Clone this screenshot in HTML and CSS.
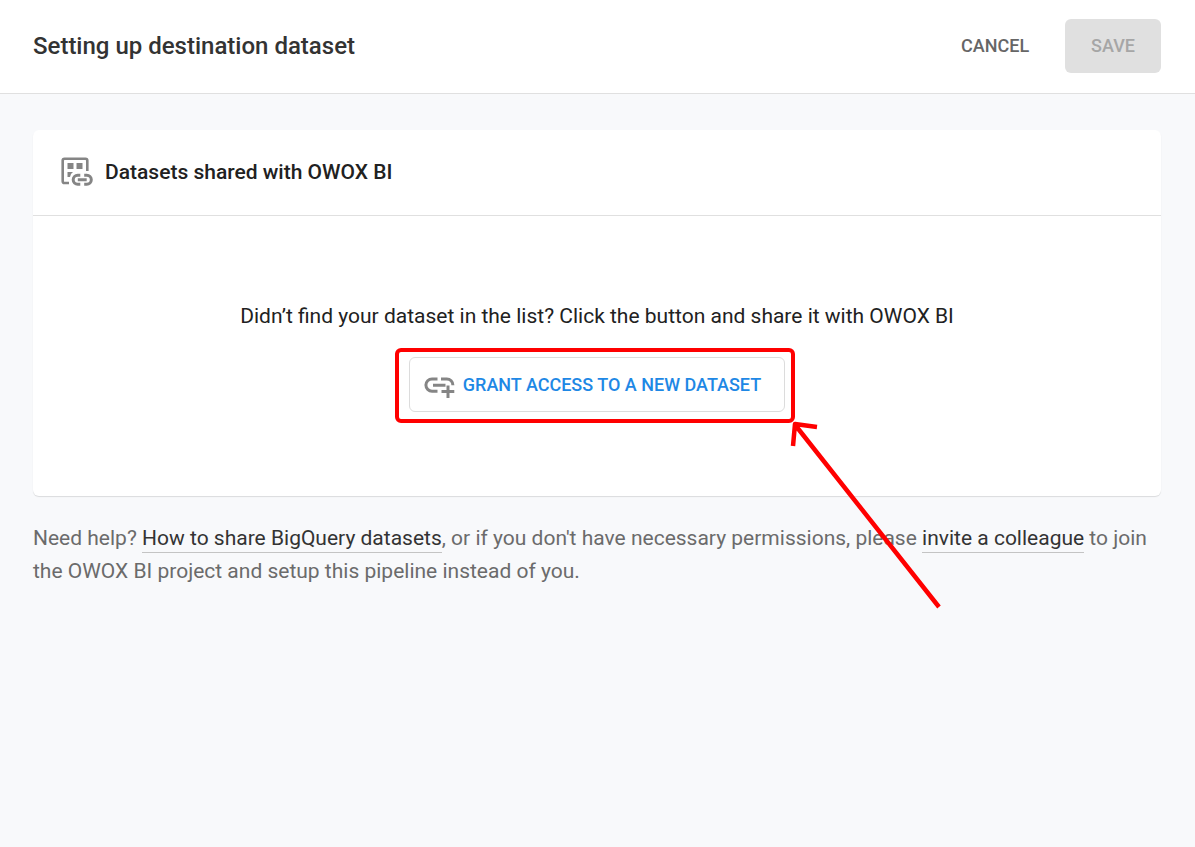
FILE: index.html
```html
<!DOCTYPE html>
<html lang="en">
<head>
    <meta charset="UTF-8">
    <meta name="viewport" content="width=device-width, initial-scale=1.0">
    <title>Setting up destination dataset</title>
    <link rel="stylesheet" href="styles.css">
</head>
<body>
    <header class="topbar">
        <h1 class="topbar-title">Setting up destination dataset</h1>
        <div class="topbar-actions">
            <button class="btn btn-flat" type="button">CANCEL</button>
            <button class="btn btn-save" type="button" disabled>SAVE</button>
        </div>
    </header>
    <main class="content">
        <section class="card">
            <div class="card-header">
                <svg class="card-icon" viewBox="0 0 32 30" aria-hidden="true">
                    <path d="M8 26H3.500Q1.700 26 1.700 24.200V3.500Q1.700 1.700 3.500 1.700H24.500Q26.300 1.700 26.300 3.500V14" fill="none" stroke="#858585" stroke-width="2.600"/>
                    <path d="M6.500 6h6v6h-6zM15.500 6h6v6h-6zM6.500 15h5.500q-2.500 1.500-3 5H6.500z" fill="#858585"/>
                    <path d="M19.300 18.200H16.700a4.500 4.500 0 0 0 0 9H19.300M23.200 18.200H25.800a4.500 4.500 0 0 1 0 9H23.200M16.800 22.700H25.700" fill="none" stroke="#858585" stroke-width="3"/>
                </svg>
                <h2 class="card-title">Datasets shared with OWOX BI</h2>
            </div>
            <div class="card-body">
                <p class="prompt">Didn’t find your dataset in the list? Click the button and share it with OWOX BI</p>
                <div class="grant">
                    <button class="btn btn-grant" type="button">
                        <svg class="grant-icon" viewBox="0 0 31 26" aria-hidden="true">
                            <path d="M13.500 7H8a6.100 6.100 0 0 0 0 12.200H13.500M17 7H22.800a6.100 6.100 0 0 1 6.100 6.200M9 13.200H21.500M17.500 19.400H30.300M24 13.500V26" fill="none" stroke="#858585" stroke-width="3"/>
                        </svg>
                        GRANT ACCESS TO A NEW DATASET
                    </button>
                    <div class="highlight"></div>
                    <svg class="arrow" viewBox="0 0 156 192" aria-hidden="true">
                        <path d="M149 187L6 6M3 26L5 4L27 7" fill="none" stroke="#f00" stroke-width="4.500" stroke-linejoin="round"/>
                    </svg>
                </div>
            </div>
        </section>
        <p class="help">Need help? <a href="#">How to share BigQuery datasets</a>, or if you don't have necessary permissions, please <a href="#">invite a colleague</a> to join the OWOX BI project and setup this pipeline instead of you.</p>
    </main>
</body>
</html>
```
FILE: styles.css
```css
* {
    box-sizing: border-box;
}

body {
    margin: 0;
    min-height: 100vh;
    font-family: Roboto, sans-serif;
    font-size: 21px;
    color: #212121;
    background-color: #f8f9fb;
}

h1, h2, p {
    margin: 0;
}

/* Top bar */
.topbar {
    display: flex;
    align-items: center;
    justify-content: space-between;
    padding: 19px 34px 20px 33px;
    background-color: #fff;
    border-bottom: 1px solid #e0e0e0;
}

.topbar-title {
    font-size: 24px;
    font-weight: 500;
    line-height: 32px;
    color: #333;
}

.topbar-actions {
    display: flex;
    gap: 10px;
}

.btn {
    height: 54px;
    padding: 0 26px 2px;
    border: none;
    border-radius: 6px;
    background: none;
    font-family: inherit;
    font-size: 18px;
    font-weight: 500;
    cursor: pointer;
}

.btn-flat {
    color: #666;
}

.btn-save {
    color: #a6a6a6;
    background-color: #e0e0e0;
    cursor: default;
}

/* Card */
.content {
    padding: 36px 34px 36px 33px;
}

.card {
    background-color: #fff;
    border-radius: 6px;
    box-shadow: 0 1px 1px rgba(0, 0, 0, 0.12);
}

.card-header {
    display: flex;
    align-items: center;
    gap: 12px;
    padding: 26px 28px 27px;
    border-bottom: 1px solid #e0e0e0;
}

.card-icon {
    width: 32px;
    height: 30px;
}

.card-title {
    font-size: 21px;
    font-weight: 500;
    line-height: 32px;
}

.card-body {
    display: flex;
    flex-direction: column;
    align-items: center;
    gap: 25px;
    padding: 84px 24px;
}

.prompt {
    line-height: 32px;
    text-align: center;
}

.grant {
    position: relative;
}

.btn-grant {
    display: flex;
    align-items: center;
    gap: 8px;
    height: 55px;
    padding: 0 23px 0 14px;
    border: 1px solid #dcdcdc;
    color: #1e88e5;
}

.grant-icon {
    width: 31px;
    height: 26px;
}

/* Red frame and arrow over the button */
.highlight {
    position: absolute;
    top: -9px;
    right: -10px;
    bottom: -11px;
    left: -14px;
    border: 4px solid #f00;
    border-radius: 6px;
    pointer-events: none;
}

.arrow {
    position: absolute;
    top: 63px;
    left: calc(100% + 5px);
    width: 156px;
    height: 192px;
    pointer-events: none;
}

/* Help text */
.help {
    margin-top: 26px;
    line-height: 33px;
    color: #6b6b6b;
}

.help a {
    color: #333;
    text-decoration: none;
    border-bottom: 1px solid #c4c4c4;
    padding-bottom: 2px;
}
```
